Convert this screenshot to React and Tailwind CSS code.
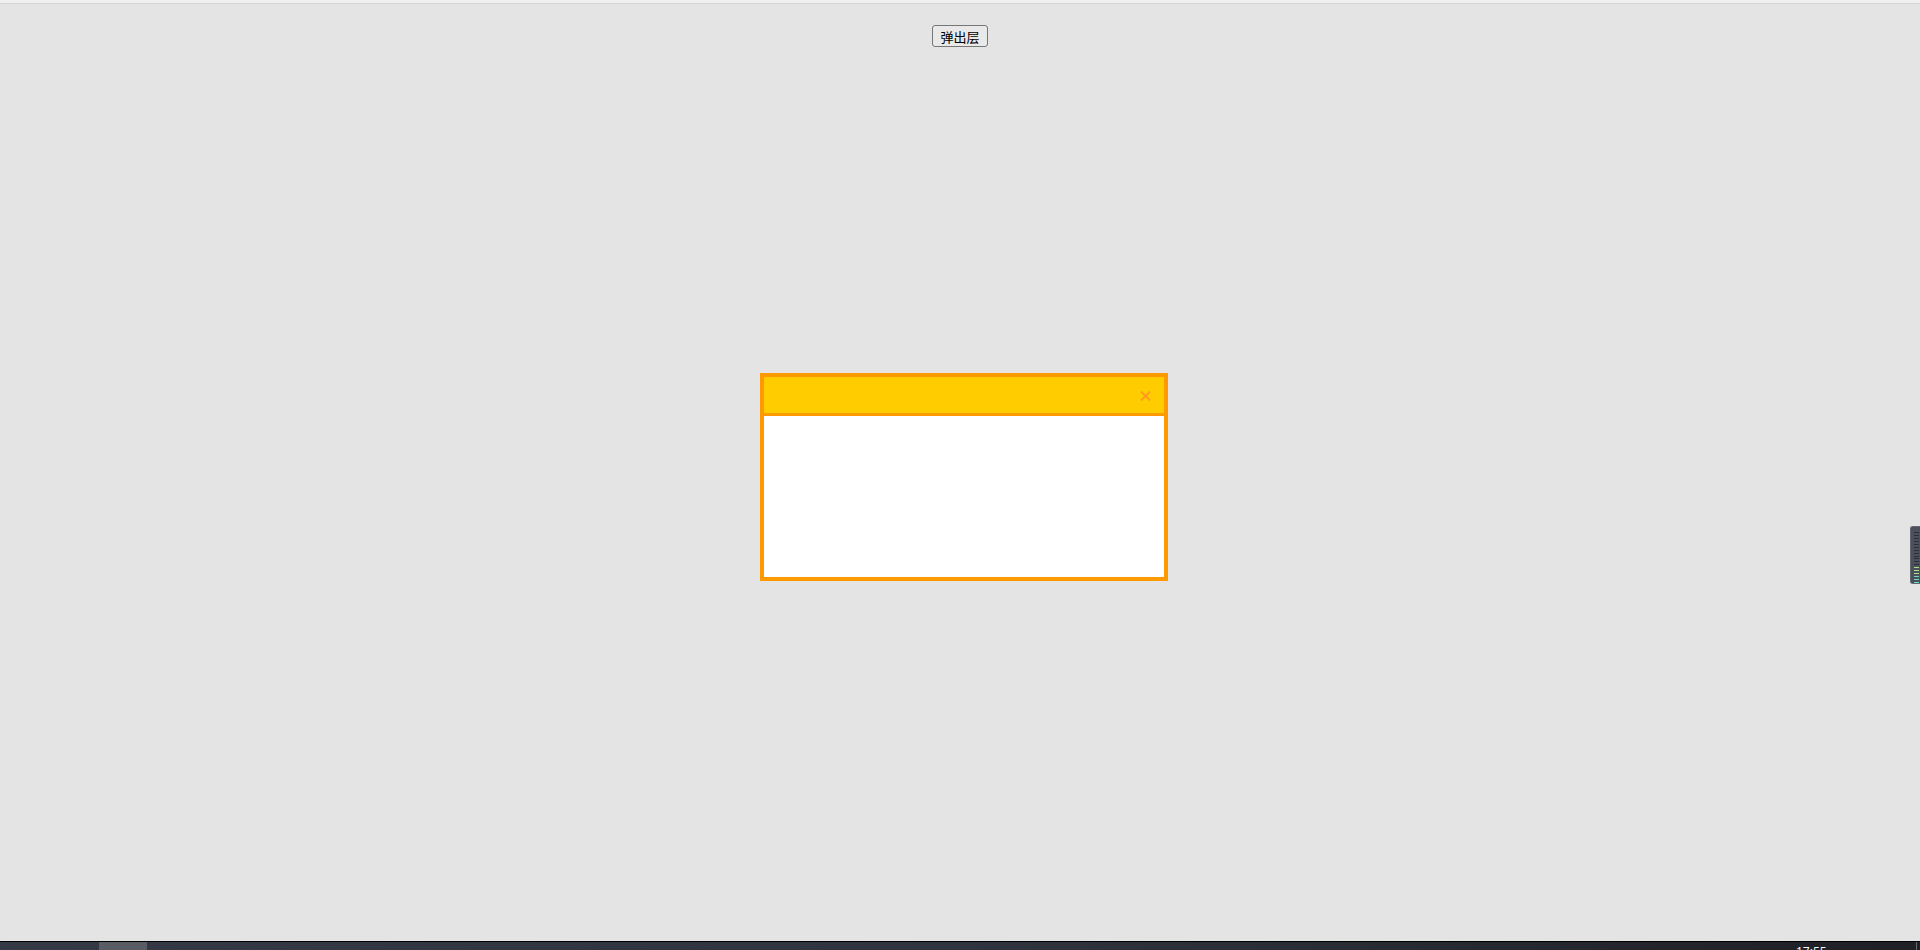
import React from 'react';

const App = () => {
  return (
    <div className="relative w-[1920px] h-[950px] flex flex-col overflow-hidden bg-[#e4e4e4] font-['Noto_Sans_CJK_SC',sans-serif]">
      {/* top edge */}
      <div className="h-[4px] bg-[#f0f0f0] border-b border-[#d6d6d6]" />

      {/* page */}
      <main className="flex-1 flex flex-col items-center pt-[21px]">
        <button className="h-[22px] px-[7px] text-[13px] leading-none text-black bg-[#e9e9e9] border border-[#767676] rounded-[3px] font-['Noto_Sans_CJK_SC',sans-serif]">
          弹出层
        </button>
      </main>

      {/* popup layer */}
      <div className="absolute left-[760px] top-[373px] w-[408px] h-[208px] flex flex-col border-4 border-[#ff9900] bg-white">
        <div className="h-[39px] flex items-center justify-end pr-[13px] pt-[1px] bg-[#ffcc00] border-b-[3px] border-[#ff9900]">
          <svg width="11" height="10" viewBox="0 0 11 10" className="mt-[1px]">
            <path d="M1 0.5 L10 9.5 M10 0.5 L1 9.5" stroke="#ff9a1f" strokeWidth="1.8" />
          </svg>
        </div>
        <div className="flex-1" />
      </div>

      {/* side widget */}
      <div className="absolute right-0 top-[526px] w-[10px] h-[58px] rounded-l-[3px] bg-[#4b505c] border border-r-0 border-[#62666f] flex flex-col items-center gap-[2px] pt-[5px] pl-[1px]">
        {Array.from({ length: 12 }).map((_, i) => (
          <div key={'d' + i} className="w-[5px] h-[1px] bg-[#2b2f37]" />
        ))}
        {Array.from({ length: 6 }).map((_, i) => (
          <div key={'g' + i} className={'w-[5px] h-[1px] ' + (i < 3 ? 'bg-[#a6e08a]' : 'bg-[#6fd6c0]')} />
        ))}
      </div>

      {/* taskbar */}
      <footer className="h-[9px] flex border-t border-black bg-linear-to-r from-[#353945] via-[#30343e] to-[#1f2025] overflow-hidden">
        <div className="w-[99px]" />
        <div className="w-[48px] bg-[#5a5c63]" />
        <div className="flex-1" />
        <div className="w-[130px] pl-[11px] text-[12px] leading-none pt-[4px] text-white font-['Open_Sans',sans-serif]">17:55</div>
        <div className="w-[4px] border-l border-[#6a6a6a] ml-[1px]" />
      </footer>
    </div>
  );
};

export default App;
